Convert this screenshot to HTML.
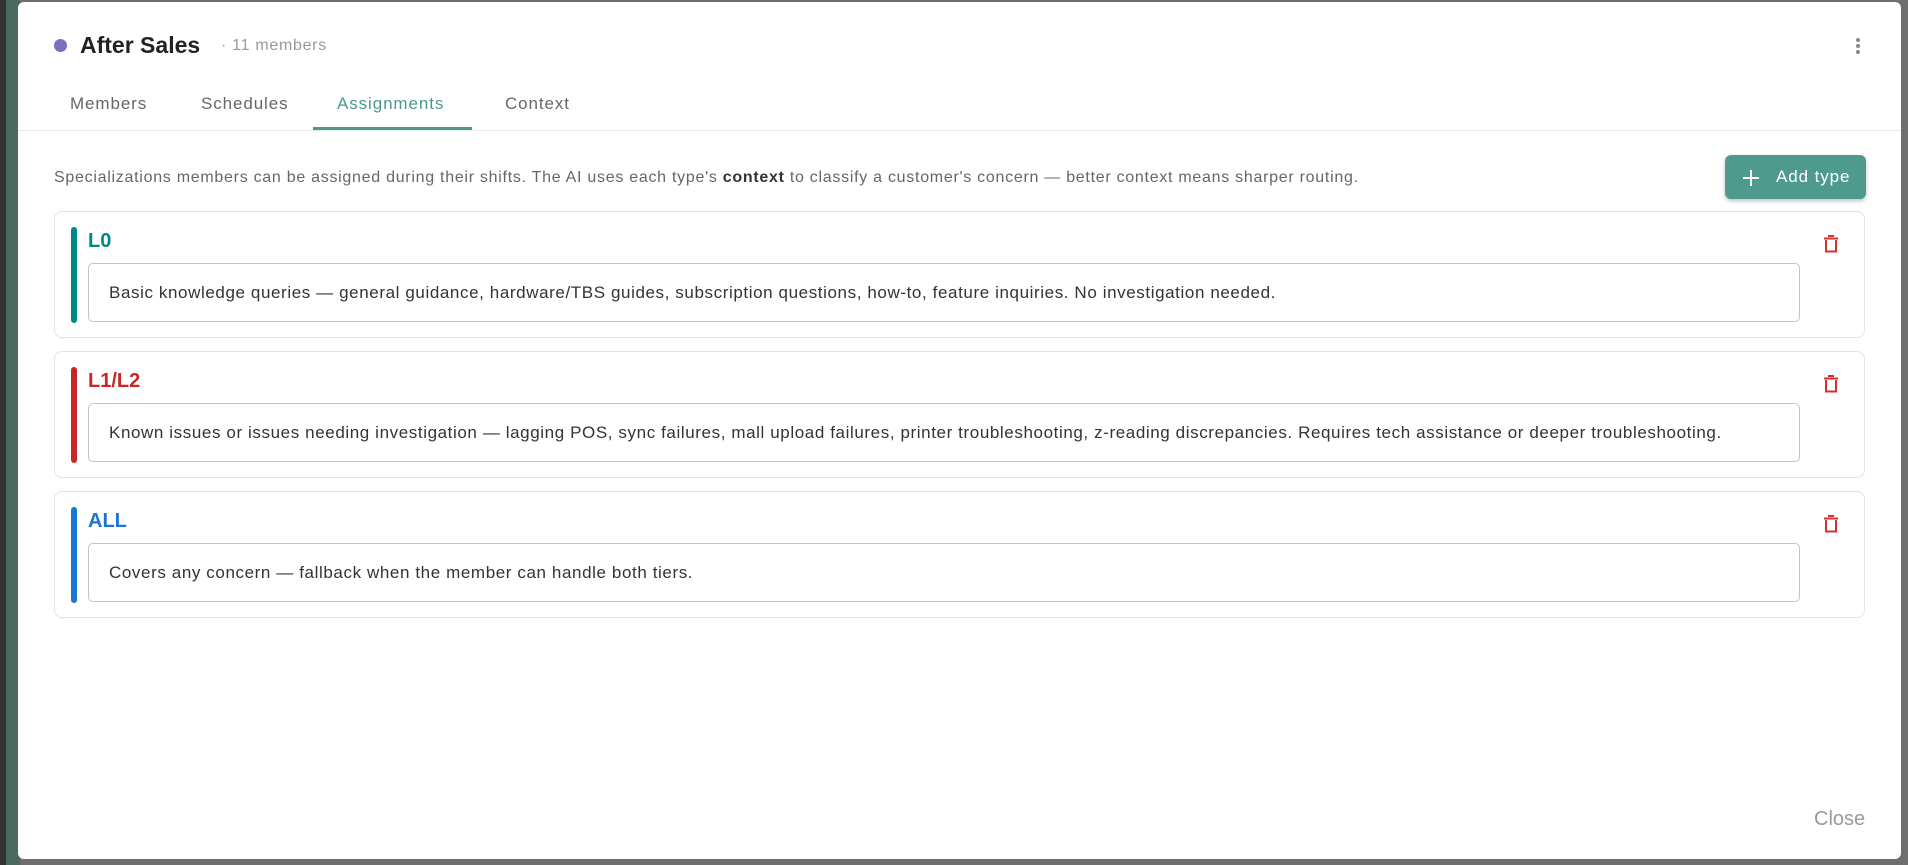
<!DOCTYPE html>
<html><head><meta charset="utf-8"><style>
*{box-sizing:border-box;margin:0;padding:0}
body{width:1908px;height:865px;overflow:hidden;background:#6e6e6e;font-family:"Liberation Sans",sans-serif;position:relative}
.ls{position:absolute;left:0;top:0;width:6px;height:865px;background:#333}
.lg{position:absolute;left:6px;top:0;width:14px;height:865px;background:#4b6a5d}
.dlg{position:absolute;left:18px;top:2px;width:1883px;height:857px;background:#fff;border-radius:6px}
.abs{position:absolute}
.tab{position:absolute;top:92px;font-size:17px;color:#666;letter-spacing:0.9px}
.card{position:absolute;left:36px;width:1811px;height:127px;border:1px solid #e3e3e3;border-radius:8px}
.bar{position:absolute;left:16px;top:15px;width:6px;height:96px;border-radius:3px}
.lbl{position:absolute;left:33px;top:18px;font-size:20px;font-weight:bold}
.box{position:absolute;left:33px;top:51px;width:1712px;height:59px;border:1px solid #c4c4c4;border-radius:5px;font-size:17px;letter-spacing:0.6px;color:#333;padding:19px 0 0 20px;white-space:nowrap}
.trash{position:absolute;left:1768px;top:23px}
</style></head><body>
<div class="ls"></div><div class="lg"></div>
<div class="dlg">
<div class="abs" style="left:36px;top:37px;width:13px;height:13px;border-radius:50%;background:#7a6ec2"></div>
<div class="abs" style="left:62px;top:30px;font-size:23px;font-weight:bold;color:#222">After Sales</div>
<div class="abs" style="left:203px;top:35px;font-size:16px;color:#999;letter-spacing:0.7px">· 11 members</div>
<svg class="abs" style="left:1836px;top:35px" width="8" height="18"><circle cx="4" cy="3" r="2" fill="#888"/><circle cx="4" cy="9" r="2" fill="#888"/><circle cx="4" cy="15" r="2" fill="#888"/></svg>
<div class="tab" style="left:52px">Members</div>
<div class="tab" style="left:183px">Schedules</div>
<div class="tab" style="left:319px;color:#4a9a8c">Assignments</div>
<div class="tab" style="left:487px">Context</div>
<div class="abs" style="left:295px;top:125px;width:159px;height:3px;background:#4a9a8c"></div>
<div class="abs" style="left:0;top:128px;width:1883px;height:1px;background:#e8e8e8"></div>
<div class="abs" style="left:36px;top:167px;font-size:16px;letter-spacing:0.72px;color:#666;white-space:nowrap">Specializations members can be assigned during their shifts. The AI uses each type's <b style="color:#333">context</b> to classify a customer's concern — better context means sharper routing.</div>
<div class="abs" style="left:1707px;top:153px;width:141px;height:44px;background:#4e9b8e;border-radius:6px;box-shadow:0 2px 4px rgba(0,0,0,.25);color:#fff;font-size:17px;letter-spacing:0.9px">
<svg class="abs" style="left:17px;top:14px" width="18" height="18"><path d="M9 1V17M1 9H17" stroke="#fff" stroke-width="2"/></svg>
<span class="abs" style="left:51px;top:12px">Add type</span></div>

<div class="card" style="top:209px">
<div class="bar" style="background:#00878a"></div><div class="lbl" style="color:#00878a">L0</div>
<div class="box">Basic knowledge queries — general guidance, hardware/TBS guides, subscription questions, how-to, feature inquiries. No investigation needed.</div>
<svg class="trash" width="16" height="18"><path d="M5 1H11M1 3.5H15M3 5V16.5H13V5" stroke="#d32f2f" stroke-width="2" fill="none"/></svg>
</div>
<div class="card" style="top:349px">
<div class="bar" style="background:#c62828"></div><div class="lbl" style="color:#c62828">L1/L2</div>
<div class="box">Known issues or issues needing investigation — lagging POS, sync failures, mall upload failures, printer troubleshooting, z-reading discrepancies. Requires tech assistance or deeper troubleshooting.</div>
<svg class="trash" width="16" height="18"><path d="M5 1H11M1 3.5H15M3 5V16.5H13V5" stroke="#d32f2f" stroke-width="2" fill="none"/></svg>
</div>
<div class="card" style="top:489px">
<div class="bar" style="background:#1976d2"></div><div class="lbl" style="color:#1976d2">ALL</div>
<div class="box">Covers any concern — fallback when the member can handle both tiers.</div>
<svg class="trash" width="16" height="18"><path d="M5 1H11M1 3.5H15M3 5V16.5H13V5" stroke="#d32f2f" stroke-width="2" fill="none"/></svg>
</div>
<div class="abs" style="left:1796px;top:806px;font-size:20px;color:#999">Close</div>
</div>
</body></html>
